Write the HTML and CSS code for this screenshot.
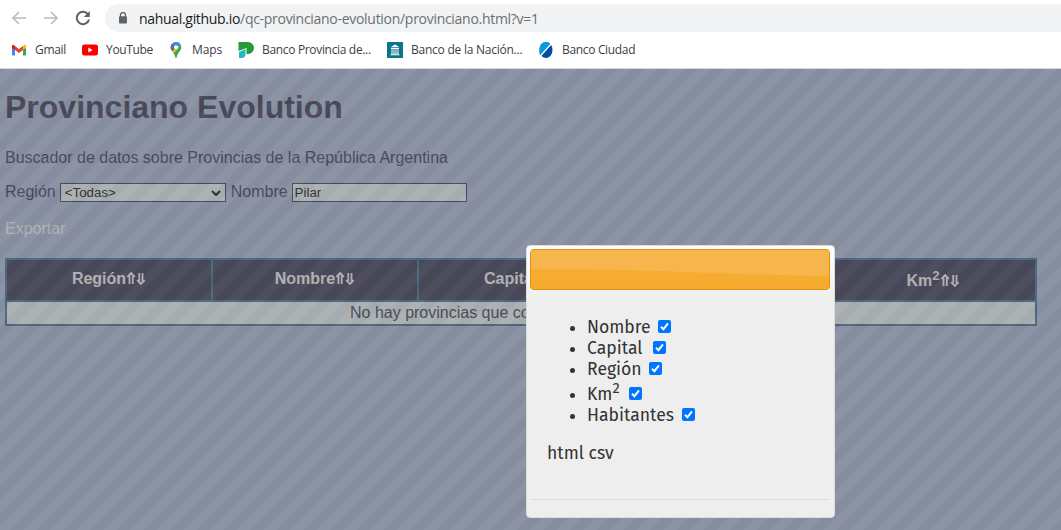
FILE: index.html
```html
<!DOCTYPE html>
<html lang="es">
<head>
<meta charset="utf-8">
<title>Provinciano Evolution</title>
<link rel="stylesheet" href="styles.css">
</head>
<body>
<header class="browser">
  <div class="toolbar">
    <svg class="nav" viewBox="0 0 16 16"><path d="M15 8H2M8 2L2 8l6 6"/></svg>
    <svg class="nav forward" viewBox="0 0 16 16"><path d="M1 8h13M8 2l6 6-6 6"/></svg>
    <svg class="nav reload" viewBox="0 0 16 16"><path d="M13.2 4.6A6.2 6.2 0 1 0 14 9.5"/><path class="solid" d="M14.8 1v6H8.8z"/></svg>
    <div class="address">
      <svg class="lock" viewBox="0 0 10 12"><path d="M2.500 5V3a2.500 2.500 0 0 1 5 0v2" fill="none" stroke="#5f6368" stroke-width="1.3"/><rect x="1" y="4.3" width="8" height="7.2" rx="1" fill="#5f6368"/></svg>
      <span class="url"><b>nahual.github.io</b>/qc-provinciano-evolution/provinciano.html?v=1</span>
    </div>
  </div>
  <nav class="bookmarks">
    <a class="mark gmail"><svg viewBox="0 0 16 16"><path fill="#4285f4" d="M1 5l3 2v6.500H2q-1 0-1-1z"/><path fill="#34a853" d="M12 7l3-2v7.500q0 1-1 1h-2z"/><path fill="#ea4335" d="M4 4l4 3 4-3v4l-4 3-4-3z"/><path fill="#c5221f" d="M1 4.500Q1 1.500 4 4v4L1 5.800z"/><path fill="#fbbc04" d="M15 4.500Q15 1.500 12 4v4l3-2.200z"/></svg><span>Gmail</span></a>
    <a class="mark youtube"><svg viewBox="0 0 16 16"><rect y="2.500" width="16" height="11" rx="2.500" fill="#f00"/><path fill="#fff" d="M6.300 5.600v4.800L10.600 8z"/></svg><span>YouTube</span></a>
    <a class="mark maps"><svg viewBox="0 0 16 16"><defs><clipPath id="pin"><path d="M8 0a5.300 5.300 0 0 1 5.300 5.300C13.300 9 9.600 10.500 8.600 15.500Q8 16.500 7.400 15.500C6.400 10.500 2.700 9 2.700 5.300A5.300 5.300 0 0 1 8 0z"/></clipPath></defs><g clip-path="url(#pin)"><path fill="#34a853" d="M0 0h16v16H0z"/><path fill="#fbbc04" d="M1 12L14 0 9 8l-5 5z"/><path fill="#4285f4" d="M7 0h9L8 6z"/><path fill="#1a73e8" d="M3 1l5 4-6 6H0V0z"/><path fill="#ea4335" d="M2.500 3l3 2L2 9z"/><path fill="#4285f4" d="M5 0h9L8 6 4 2z"/></g><circle cx="8" cy="5.300" r="2" fill="#fff"/></svg><span>Maps</span></a>
    <a class="mark provincia"><svg viewBox="0 0 16 16"><path fill="#279b37" d="M.5 0H10a5.500 5.500 0 0 1 0 12H8.500V6L.5 9z"/><path fill="#26b5c1" d="M1 10l6.500-3v5q0 4-4 4H1z"/></svg><span>Banco Provincia de...</span></a>
    <a class="mark nacion"><svg viewBox="0 0 16 16"><path fill="#08758b" d="M0 0h16v16H0z"/><path fill="#fff" d="M8 2.500l4.500 2.700h-9zM4 6h8v1H4zM4.500 7.300h1v4h-1zM6.500 7.300h1v4h-1zM8.500 7.300h1v4h-1zM10.500 7.300h1v4h-1zM4 11.500h8v.8H4zM3.300 12.500h9.400v.7H3.300z"/></svg><span>Banco de la Nación...</span></a>
    <a class="mark ciudad"><svg viewBox="0 0 16 16"><ellipse cx="8" cy="8" rx="6.500" ry="8" fill="#064e9c"/><path fill="#069bdc" d="M1.500 12C.5 5 3 0 8 0q3 0 5 2.500L3.300 13.500z"/><path d="M2.500 14L13.500 1.500" stroke="#fff" stroke-width="1.200"/></svg><span>Banco Ciudad</span></a>
  </nav>
</header>

<div class="viewport">
  <main class="page">
    <h1>Provinciano Evolution</h1>
    <p class="lead">Buscador de datos sobre Provincias de la República Argentina</p>
    <form class="filters">
      <label>Región</label>
      <div class="field select"><span>&lt;Todas&gt;</span><svg viewBox="0 0 10 6"><path d="M1 1l4 4 4-4" fill="none" stroke="#000" stroke-width="2"/></svg></div>
      <label>Nombre</label>
      <div class="field name">Pilar</div>
    </form>
    <a class="export">Exportar</a>
    <table class="results">
      <thead><tr><th>Región<svg class="sort" viewBox="0 0 18 12"><path d="M1 4.500L4.500 1 8 4.500M3 3.500V11M6 3.500V11M10 7.500l3.500 3.500L17 7.500M12 8.500V1M15 8.500V1"/></svg></th><th>Nombre<svg class="sort" viewBox="0 0 18 12"><path d="M1 4.500L4.500 1 8 4.500M3 3.500V11M6 3.500V11M10 7.500l3.500 3.500L17 7.500M12 8.500V1M15 8.500V1"/></svg></th><th class="capital">Capital</th><th></th><th>Km<sup>2</sup><svg class="sort" viewBox="0 0 18 12"><path d="M1 4.500L4.500 1 8 4.500M3 3.500V11M6 3.500V11M10 7.500l3.500 3.500L17 7.500M12 8.500V1M15 8.500V1"/></svg></th></tr></thead>
      <tbody><tr><td colspan="5">No hay provincias que co</td></tr></tbody>
    </table>
  </main>
  <div class="overlay"></div>
  <section class="dialog">
    <svg class="titlebar" viewBox="0 0 300 41" preserveAspectRatio="none"><defs><linearGradient id="gloss" x2="0" y2="1"><stop stop-color="#f6ae35"/><stop offset="1" stop-color="#f6ab2f"/></linearGradient></defs><rect x=".5" y=".5" width="299" height="40" rx="3.500" fill="url(#gloss)" stroke="#e78f08"/><path fill="#f7b64d" d="M1 20V4q0-3 3-3h292q3 0 3 3v22.500C190 26 110 19 1 20z"/></svg>
    <div class="content">
      <ul>
        <li><span class="w-nombre">Nombre</span><span class="check"><svg viewBox="0 0 13 13"><path d="M3 6.800l2.400 2.400L10 3.300"/></svg></span></li>
        <li><span class="w-capital">Capital</span><span class="check"><svg viewBox="0 0 13 13"><path d="M3 6.800l2.400 2.400L10 3.300"/></svg></span></li>
        <li><span class="w-region">Región</span><span class="check"><svg viewBox="0 0 13 13"><path d="M3 6.800l2.400 2.400L10 3.300"/></svg></span></li>
        <li class="tall"><span class="w-km">Km<sup>2</sup></span><span class="check"><svg viewBox="0 0 13 13"><path d="M3 6.800l2.400 2.400L10 3.300"/></svg></span></li>
        <li><span class="w-habitantes">Habitantes</span><span class="check"><svg viewBox="0 0 13 13"><path d="M3 6.800l2.400 2.400L10 3.300"/></svg></span></li>
      </ul>
      <p class="formats"><a>html</a> <a>csv</a></p>
    </div>
    <div class="buttonpane"></div>
  </section>
</div>
</body>
</html>
```
FILE: styles.css
```css
* { box-sizing: border-box; }
body { margin: 0; height: 530px; overflow: hidden; background: #fff; font-family: "Liberation Sans", Arial, sans-serif; }
.browser { height: 69px; padding-top: 4px; border-bottom: 1px solid #d5d7da; font-family: "Open Sans", "Noto Sans", sans-serif; }
.toolbar { display: flex; align-items: center; height: 28px; padding-left: 11px; }
.nav { width: 16px; height: 16px; margin-right: 16px; fill: none; stroke: #babcbe; stroke-width: 1.7; }
.reload { margin-right: 14px; stroke: #5f6368; stroke-width: 2; }
.reload .solid { fill: #5f6368; stroke: none; }
.address { display: flex; align-items: center; flex: 1; height: 28px; padding-left: 13px; border-radius: 14px 0 0 14px; background: #f1f3f4; }
.lock { width: 10px; height: 12px; margin-right: 11px; }
.url { font-size: 14px; letter-spacing: -.29px; color: #6b6f73; white-space: nowrap; }
.url b { font-weight: 400; letter-spacing: -.31px; color: #202124; }
.bookmarks { display: flex; height: 35px; padding-left: 11px; }
.mark { display: flex; align-items: center; font-size: 12px; letter-spacing: -.33px; color: #3c4043; white-space: nowrap; }
.mark svg { width: 16px; height: 16px; margin-right: 8px; }
.gmail { width: 71px; }
.youtube { width: 86px; }
.maps { width: 70px; letter-spacing: -.1px; }
.provincia { width: 149px; }
.nacion { width: 151px; letter-spacing: -.24px; }

.viewport { position: relative; height: 461px; overflow: hidden; background: #b1bfe2; }
.page { padding: 20px 5px 0; color: #343456; }
h1 { margin: 0; font-size: 32px; line-height: 37px; }
.lead { margin: 23px 0 0; font-size: 16px; line-height: 18px; }
.filters { display: flex; align-items: center; height: 20px; margin-top: 15px; font-size: 16px; }
.field { display: flex; align-items: center; height: 19px; padding: 0 3px; margin: 1px 5px 0 4px; border: 1px solid #343456; background: #f1fdff; font-size: 13.333px; color: #000; }
.select { justify-content: space-between; width: 166px; padding: 0 4px; }
.select svg { width: 10px; height: 6px; }
.name { width: 175px; padding: 0 2px; margin-right: 0; }
.export { display: block; margin-top: 17px; font-size: 16px; line-height: 20px; color: #fff; }
.results { width: 1032px; margin-top: 19px; table-layout: fixed; border-collapse: collapse; border: 2px solid #357399; }
.results th { height: 42px; padding: 0 0 2px; border: 2px solid #357399; background: #343456; color: #fff; font-size: 16px; line-height: 18px; }
.results th:last-child { padding: 1px 0 0; }
.results .capital { padding-left: 65px; text-align: left; }
.results td { height: 24px; padding: 0 0 0 343px; background: #f1fdff; font-size: 16px; line-height: 18px; text-align: left; }
.results sup { font-size: 13.333px; line-height: 0; }
.sort { width: 20px; height: 13px; fill: none; stroke: #fff; stroke-width: 1.7; vertical-align: -1px; }
.overlay { position: absolute; inset: 0; opacity: .5; background: repeating-linear-gradient(135deg, #5b5b5b 0 2.500px, #686868 3.500px 12px, #5b5b5b 13px 18.856px); }
.dialog { position: absolute; left: 526px; top: 176px; width: 309px; height: 273px; padding: 3px 4px 3px 3px; border: 1px solid #ddd; border-radius: 4px; background: linear-gradient(#fff, #eee 55px); color: #333; font: 17.600px/21px "Trebuchet MS", "Fira Sans", "Open Sans", sans-serif; }
.titlebar { display: block; width: 300px; height: 41px; }
.content { height: 209px; padding: 27px 17px 0; }
.content ul { margin: 0; padding-left: 40px; }
.content li { height: 21px; white-space: nowrap; }
.content li > span { display: inline-block; }
.content .tall { height: 25px; padding-top: 4px; }
.content sup { font-size: 14.600px; line-height: 0; }
.w-nombre { width: 71px; }
.w-capital { width: 66px; }
.w-region { width: 62px; }
.w-km { width: 42px; }
.w-habitantes { width: 95px; }
.check { width: 13px; height: 13px; border-radius: 2px; background: #0075ff; }
.check svg { display: block; width: 13px; height: 13px; fill: none; stroke: #fff; stroke-width: 2; }
.formats { margin: 17px 0 0; }
.buttonpane { height: 14px; border-top: 1px solid #ddd; }
```
